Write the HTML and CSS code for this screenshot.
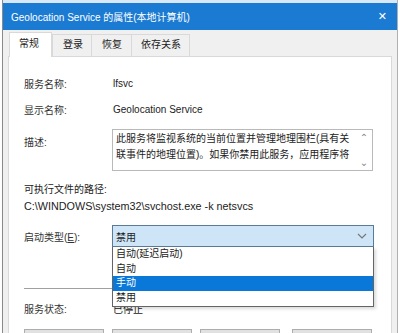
FILE: index.html
```html
<!DOCTYPE html>
<html lang="zh-CN">

<head>
    <meta charset="UTF-8">
    <title>Geolocation Service 的属性(本地计算机)</title>
    <link rel="stylesheet" href="styles.css">
</head>

<body>
    <div class="window">
        <div class="titlebar">
            <span class="title">Geolocation Service 的属性(本地计算机)</span>
            <span class="close">✕</span>
        </div>

        <div class="tabs">
            <div class="tab active">常规</div>
            <div class="tab">登录</div>
            <div class="tab">恢复</div>
            <div class="tab">依存关系</div>
        </div>

        <div class="panel">
            <div class="row first">
                <span class="label">服务名称:</span>
                <span class="value">lfsvc</span>
            </div>
            <div class="row">
                <span class="label">显示名称:</span>
                <span class="value">Geolocation Service</span>
            </div>
            <div class="row desc-row">
                <span class="label">描述:</span>
                <div class="desc">
                    <div class="desc-text">
                        <div>此服务将监视系统的当前位置并管理地理围栏(具有关</div>
                        <div>联事件的地理位置)。如果你禁用此服务，应用程序将</div>
                    </div>
                    <div class="scroll">
                        <span>&#8963;</span>
                        <span>&#8964;</span>
                    </div>
                </div>
            </div>

            <div class="path-label">可执行文件的路径:</div>
            <div class="path">C:\WINDOWS\system32\svchost.exe -k netsvcs</div>

            <div class="row startup">
                <span class="label">启动类型(<u>E</u>):</span>
                <div class="combo-wrap">
                    <div class="combo">
                        <span>禁用</span>
                        <svg width="10" height="6" viewBox="0 0 10 6">
                            <path d="M1 1 L5 5 L9 1" fill="none" stroke="#777" stroke-width="1.2" />
                        </svg>
                    </div>
                    <ul class="dropdown">
                        <li>自动(延迟启动)</li>
                        <li>自动</li>
                        <li class="selected">手动</li>
                        <li>禁用</li>
                    </ul>
                </div>
            </div>

            <div class="separator"></div>

            <div class="row status">
                <span class="label">服务状态:</span>
                <span class="value">已停止</span>
            </div>

            <div class="buttons">
                <div class="btn"></div>
                <div class="btn"></div>
                <div class="btn"></div>
                <div class="btn"></div>
            </div>
        </div>
    </div>
</body>

</html>
```

FILE: styles.css
```css
body {
    margin: 0;
    width: 400px;
    height: 333px;
    overflow: hidden;
    background-color: #ffffff;
    font-family: "Liberation Sans", "Noto Sans CJK SC", sans-serif;
    font-size: 10px;
    color: #222;
}

.window {
    margin-left: 2px;
    width: 396px;
    height: 333px;
    overflow: hidden;
    background-color: #f0f0f0;
    border-left: 1px solid #8a8a8a;
    border-right: 1px solid #b0b0b0;
    box-sizing: border-box;
}

.titlebar {
    height: 30px;
    background-color: #1b7bd2;
    border-top: 3px solid #d8e8f6;
    box-sizing: border-box;
    display: flex;
    align-items: center;
    justify-content: space-between;
    padding: 0 10px 0 8px;
    color: #fff;
}

.close {
    font-family: "DejaVu Sans", sans-serif;
    font-size: 11px;
}

.tabs {
    display: flex;
    align-items: flex-end;
    height: 26px;
    padding-left: 6px;
}

.tab {
    height: 22px;
    line-height: 20px;
    padding: 0 8px 0 9px;
    border: 1px solid #d9d9d9;
    border-bottom: none;
    margin-left: -1px;
    box-sizing: border-box;
    background-color: #f0f0f0;
}

.tab.active {
    height: 25px;
    line-height: 22px;
    background-color: #fff;
    padding: 0 12px 0 9px;
    margin-left: 0;
    margin-right: 1px;
    position: relative;
    z-index: 1;
    margin-bottom: -1px;
}

.tab:nth-child(2) {
    padding: 0 8px 0 10px;
}

.tab:nth-child(3) {
    padding: 0 9px 0 10px;
}

.panel {
    margin-left: 5px;
    width: 384px;
    height: 290px;
    background-color: #fff;
    border: 1px solid #d9d9d9;
    box-sizing: border-box;
    padding-left: 15px;
}

.row {
    display: flex;
    align-items: center;
    height: 26px;
}

.row.first {
    margin-top: 13px;
}

.label {
    width: 88px;
    flex-shrink: 0;
    color: #333;
}

.value {
    margin-left: 1px;
}

.desc-row {
    align-items: flex-start;
    height: auto;
    margin-top: 7px;
}

.desc-row .label {
    margin-top: 5px;
}

.desc {
    width: 261px;
    height: 42px;
    border: 1px solid #b9b9b9;
    box-sizing: border-box;
    display: flex;
}

.desc-text {
    flex: 1;
    padding: 1px 0 0 3px;
    line-height: 16px;
    overflow: hidden;
    white-space: nowrap;
}

.scroll {
    width: 16px;
    display: flex;
    flex-direction: column;
    justify-content: space-between;
    align-items: center;
    color: #888;
    font-family: "DejaVu Sans", sans-serif;
    font-size: 10px;
    padding: 2px 0;
}

.path-label {
    margin-top: 10px;
    height: 17px;
    line-height: 17px;
}

.path {
    height: 16px;
    line-height: 16px;
    font-size: 10.8px;
}

.startup {
    margin-top: 11px;
    height: 22px;
}

.combo-wrap {
    position: relative;
}

.combo {
    width: 262px;
    height: 22px;
    box-sizing: border-box;
    border: 1px solid #5a7a98;
    background-color: #cde5f7;
    display: flex;
    align-items: center;
    justify-content: space-between;
    padding: 0 6px 0 3px;
}

.dropdown {
    position: absolute;
    top: 22px;
    left: 0;
    width: 262px;
    margin: 0;
    padding: 0 0 1px;
    list-style: none;
    background-color: #fff;
    border: 1px solid #646464;
    border-top: none;
    box-sizing: border-box;
    box-shadow: 2px 2px 3px rgba(0, 0, 0, 0.15);
    z-index: 2;
}

.dropdown li {
    height: 14.5px;
    line-height: 14px;
    padding-left: 3px;
}

.dropdown li.selected {
    background-color: #0a78d8;
    color: #fff;
}

.separator {
    margin-top: 41px;
    width: 350px;
    border-top: 1px solid #a0a0a0;
}

.status {
    margin-top: 8px;
    height: 22px;
}

.buttons {
    display: flex;
    gap: 8px;
    margin-top: 10px;
}

.btn {
    width: 80px;
    height: 22px;
    background-color: #e1e1e1;
    border: 1px solid #adadad;
    box-sizing: border-box;
}

.btn:last-child {
    margin-left: 4px;
}
```
